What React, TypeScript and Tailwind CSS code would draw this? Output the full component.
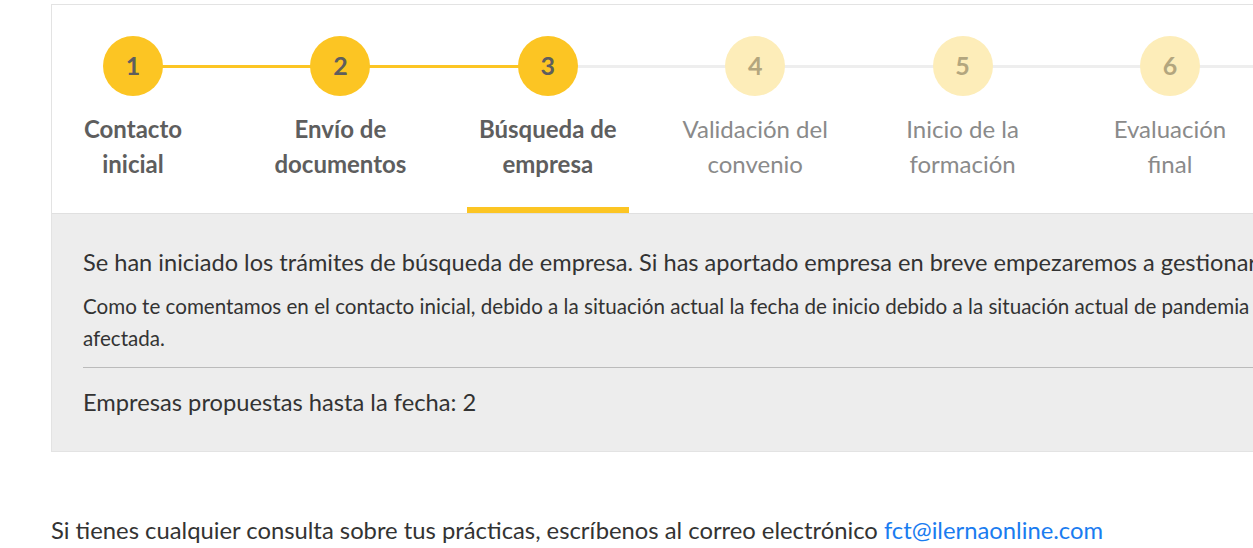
import React from "react";

const steps = [
  { n: 1, label: ["Contacto", "inicial"] },
  { n: 2, label: ["Envío de", "documentos"] },
  { n: 3, label: ["Búsqueda de", "empresa"] },
  { n: 4, label: ["Validación del", "convenio"] },
  { n: 5, label: ["Inicio de la", "formación"] },
  { n: 6, label: ["Evaluación", "final"] },
];

const current = 3;

function Step({ n, label }: { n: number; label: string[] }) {
  const done = n <= current;
  return (
    <div className="relative flex w-[162px] shrink-0 flex-col items-center">
      {/* connector to next step */}
      <div
        className={`absolute left-[81px] top-[29px] h-[3px] w-[208px] ${
          n < current ? "bg-[#fcc523]" : "bg-[#eeeeee]"
        }`}
      />
      <div
        className={`relative z-10 flex h-[60px] w-[60px] items-center justify-center rounded-full text-[25px] font-bold ${
          done ? "bg-[#fcc523] text-[#5e5e5e]" : "bg-[#fdedb9] text-[#b3a67e]"
        }`}
      >
        {n}
      </div>
      <div
        className={`mt-[15px] whitespace-nowrap text-center text-[24px] leading-[35px] ${
          done ? "font-bold text-[#5e5e5e]" : "text-[#8a8a8a]"
        }`}
      >
        {label[0]}
        <br />
        {label[1]}
      </div>
      <div
        className={`mt-[26px] h-[6px] w-full ${n === current ? "bg-[#fcc523]" : ""}`}
      />
    </div>
  );
}

export default function App() {
  return (
    <div className="h-[548px] w-[1253px] overflow-hidden bg-white font-['Lato',sans-serif] text-[#333]">
      <div className="pt-[4px] pl-[51px]">
        <div className="w-[1420px] border border-[#e3e3e3]">
          {/* Steps */}
          <div className="flex gap-[45.4px] overflow-hidden bg-white pt-[31px]">
            {steps.map((s) => (
              <Step key={s.n} n={s.n} label={s.label} />
            ))}
          </div>

          {/* Status */}
          <div className="border-t border-[#e0e0e0] bg-[#ededed] px-[31px] pt-[34px] pb-[35px]">
            <p className="whitespace-nowrap text-[23.6px] leading-[28px] text-[#333]">
              Se han iniciado los trámites de búsqueda de empresa. Si has aportado empresa en breve empezaremos a gestionarla.
            </p>
            <p className="mt-[14px] w-[1330px] text-[20.6px] leading-[32px] text-[#333]">
              Como te comentamos en el contacto inicial, debido a la situación actual la fecha de inicio debido a la situación actual de pandemia puede verse afectada.
            </p>
            <div className="mt-[13px] border-t border-[#bbbbbb]" />
            <p className="mt-[20px] text-[23.7px] leading-[28px] text-[#333]">
              Empresas propuestas hasta la fecha: 2
            </p>
          </div>
        </div>
      </div>

      <p className="mt-[64px] pl-[51px] text-[23.8px] leading-[28px] text-[#333]">
        Si tienes cualquier consulta sobre tus prácticas, escríbenos al correo electrónico{" "}
        <a href="#" className="text-[#1a7cf0]">
          fct@ilernaonline.com
        </a>
      </p>
    </div>
  );
}
